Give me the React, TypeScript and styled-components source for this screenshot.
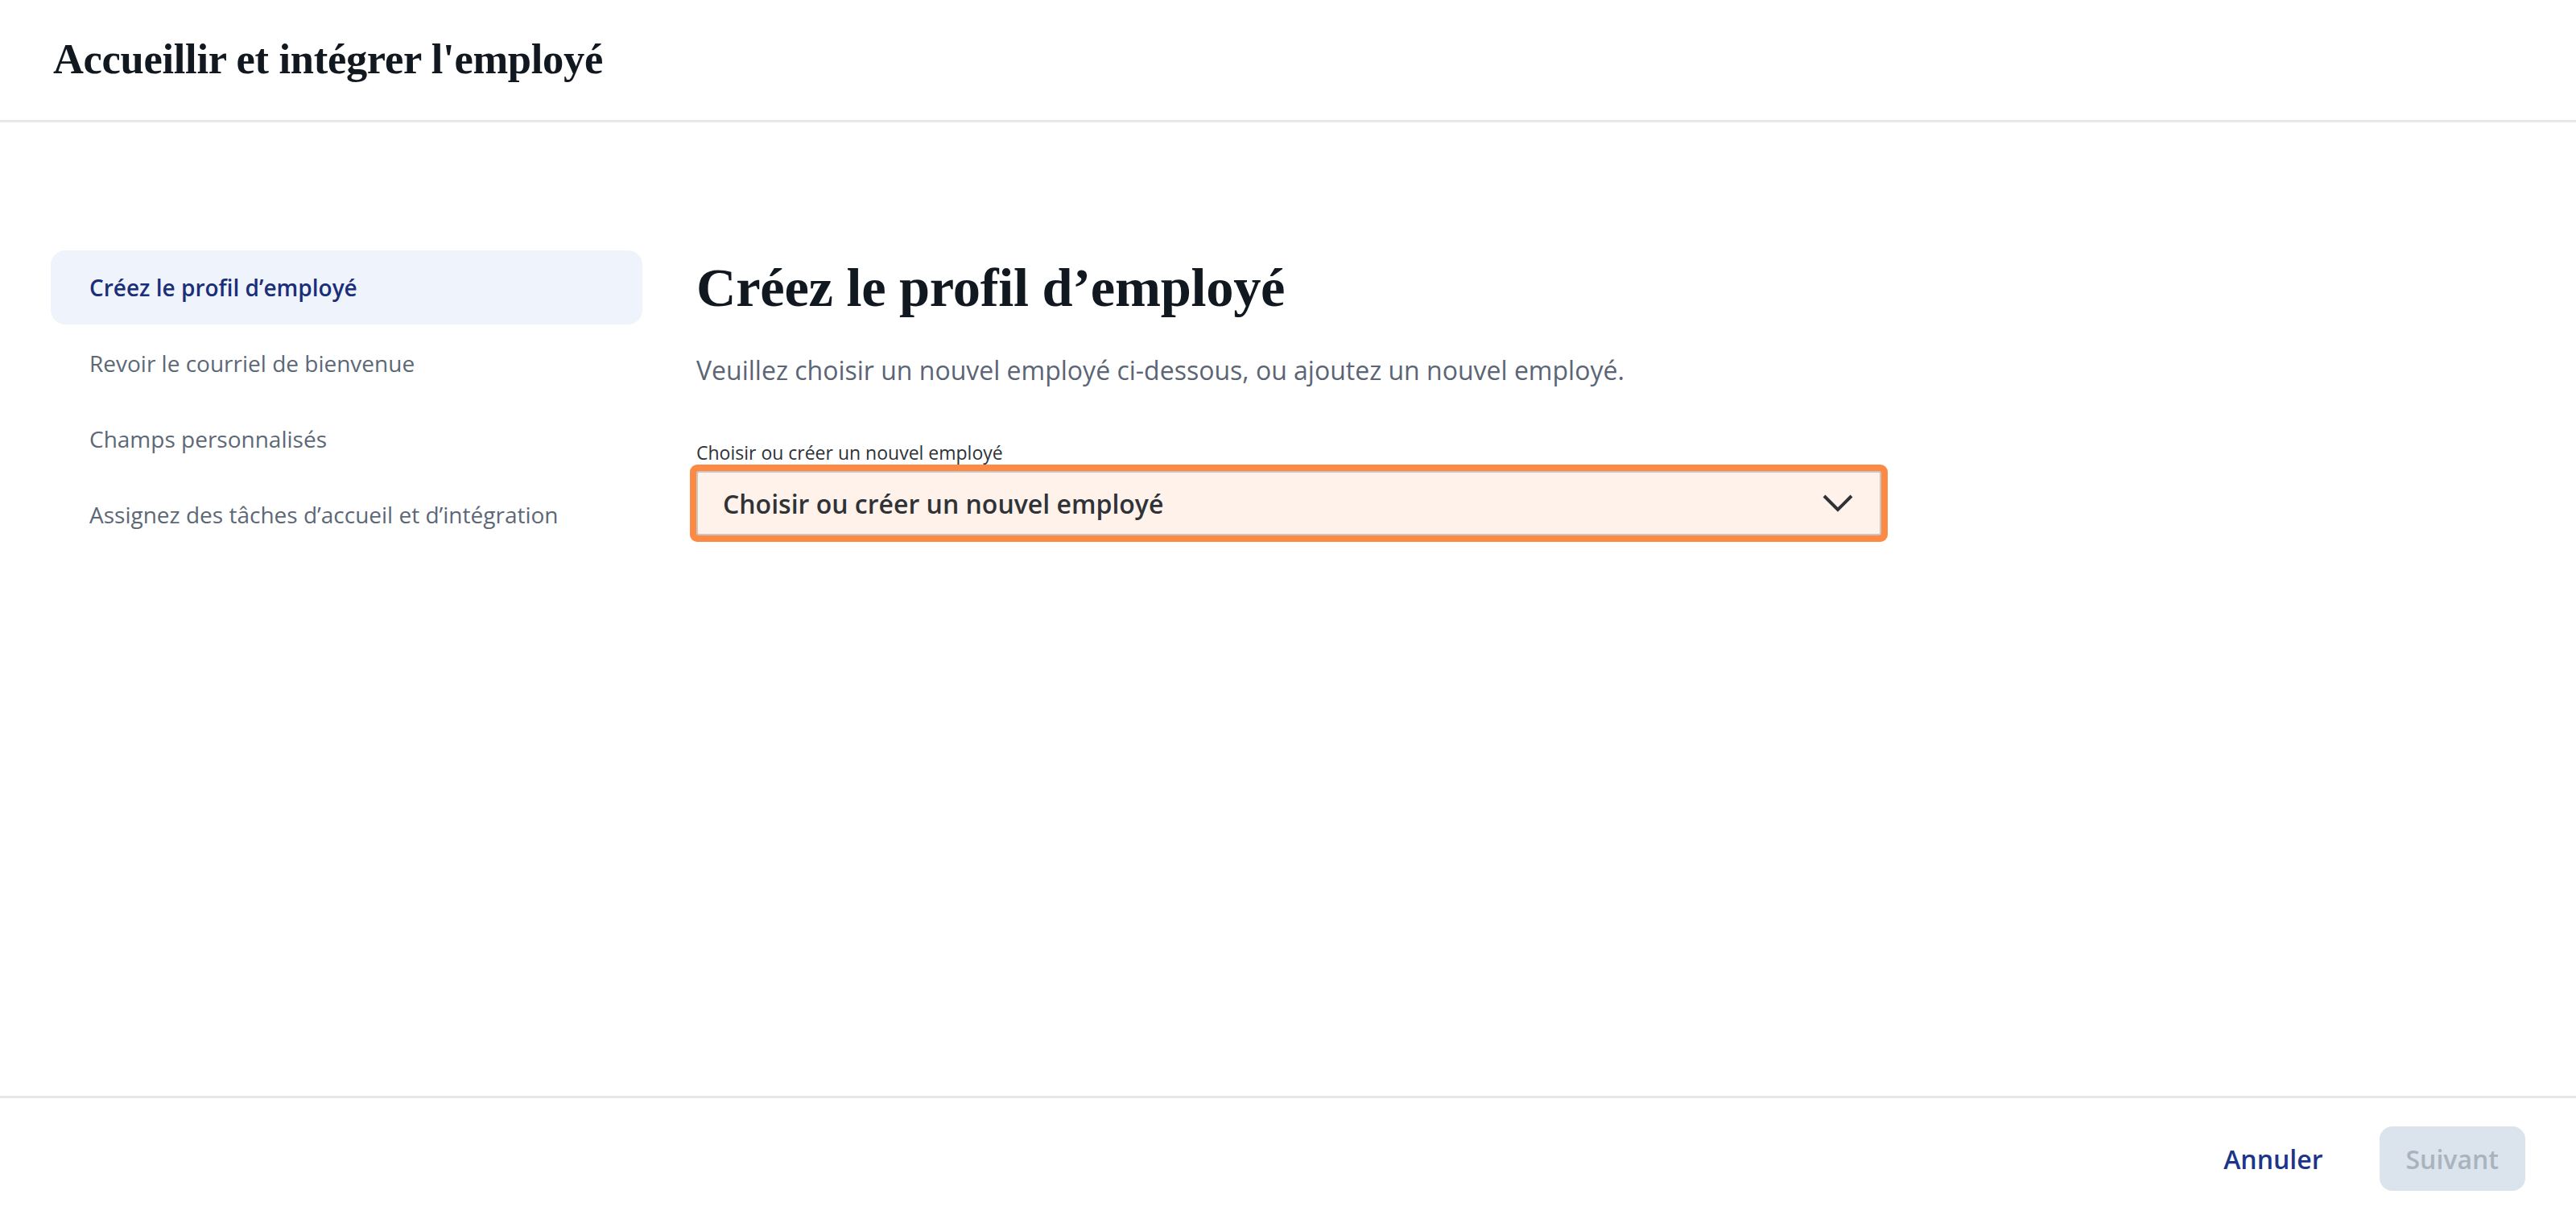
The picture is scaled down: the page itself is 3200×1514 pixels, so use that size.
import React, { useState } from "react";
import styled, { createGlobalStyle } from "styled-components";

const GlobalStyle = createGlobalStyle`
  html, body {
    margin: 0;
    padding: 0;
    background: #ffffff;
  }
  * {
    box-sizing: border-box;
  }
`;

const steps = [
  "Créez le profil d’employé",
  "Revoir le courriel de bienvenue",
  "Champs personnalisés",
  "Assignez des tâches d’accueil et d’intégration",
];

const Page = styled.div`
  min-height: 100vh;
  display: flex;
  flex-direction: column;
  font-family: "Open Sans", "Noto Sans", sans-serif;
  color: #333333;
`;

const Header = styled.header`
  height: 152px;
  display: flex;
  align-items: center;
  padding: 0 66px 4px;
  border-bottom: 3px solid #e6e7e9;
`;

const PageTitle = styled.h1`
  margin: 0;
  font-family: "Liberation Serif", "DejaVu Serif", serif;
  font-size: 52.5px;
  font-weight: 700;
  color: #121820;
  letter-spacing: -0.3px;
`;

const Body = styled.main`
  flex: 1;
  display: flex;
  gap: 67px;
  padding: 159px 63px 0;
`;

const Sidebar = styled.nav`
  width: 735px;
  display: flex;
  flex-direction: column;
  gap: 2px;
`;

interface StepProps {
  $active: boolean;
}

const Step = styled.div<StepProps>`
  height: 92px;
  display: flex;
  align-items: center;
  padding-left: 48px;
  border-radius: 18px;
  font-size: 28px;
  font-weight: ${({ $active }) => ($active ? 600 : 400)};
  color: ${({ $active }) => ($active ? "#1b2f78" : "#5d6877")};
  background: ${({ $active }) => ($active ? "#eff3fb" : "transparent")};
  cursor: pointer;
`;

const Content = styled.section`
  width: 1472px;
  display: flex;
  flex-direction: column;
`;

const Heading = styled.h2`
  margin: 0;
  height: 92px;
  display: flex;
  align-items: center;
  font-family: "Liberation Serif", "DejaVu Serif", serif;
  font-size: 68.5px;
  font-weight: 700;
  color: #121820;
  letter-spacing: -0.3px;
`;

const Intro = styled.p`
  margin: 33px 0 0;
  font-size: 32px;
  line-height: 48px;
  color: #5b6575;
`;

const FieldLabel = styled.label`
  margin-top: 63px;
  font-size: 23px;
  line-height: 30px;
  color: #2e3338;
`;

const SelectBox = styled.div`
  margin-top: 8px;
  height: 80px;
  display: flex;
  align-items: center;
  justify-content: space-between;
  padding: 0 33px 0 31px;
  background: #fff2ea;
  border: 2px solid #c9c6c4;
  border-radius: 3px;
  box-shadow: 0 0 0 8px #fc8a45;
  font-size: 32px;
  font-weight: 600;
  color: #2f3237;
  cursor: pointer;
`;

const Chevron = styled.svg`
  width: 38px;
  height: 22px;
`;

const Footer = styled.footer`
  height: 153px;
  display: flex;
  align-items: center;
  justify-content: flex-end;
  gap: 70px;
  padding: 0 63px 0 0;
  border-top: 3px solid #e6e7e9;
`;

const TextButton = styled.button`
  border: none;
  background: none;
  padding: 0;
  font-family: "Open Sans", "Noto Sans", sans-serif;
  font-size: 32px;
  font-weight: 600;
  color: #1c3587;
  cursor: pointer;
`;

const PrimaryButton = styled.button`
  height: 80px;
  padding: 0 33px;
  border: none;
  border-radius: 16px;
  background: #dbe3ec;
  font-family: "Open Sans", "Noto Sans", sans-serif;
  font-size: 32px;
  font-weight: 600;
  color: #a9b3be;
`;

const App: React.FC = () => {
  const [active, setActive] = useState(0);

  return (
    <Page>
      <GlobalStyle />
      <Header>
        <PageTitle>Accueillir et intégrer l'employé</PageTitle>
      </Header>
      <Body>
        <Sidebar>
          {steps.map((step, i) => (
            <Step key={step} $active={i === active} onClick={() => setActive(i)}>
              {step}
            </Step>
          ))}
        </Sidebar>
        <Content>
          <Heading>Créez le profil d’employé</Heading>
          <Intro>
            Veuillez choisir un nouvel employé ci-dessous, ou ajoutez un nouvel employé.
          </Intro>
          <FieldLabel>Choisir ou créer un nouvel employé</FieldLabel>
          <SelectBox>
            <span>Choisir ou créer un nouvel employé</span>
            <Chevron viewBox="0 0 38 22" fill="none">
              <path d="M2 2 L19 19 L36 2" stroke="#2f3237" strokeWidth="4" />
            </Chevron>
          </SelectBox>
        </Content>
      </Body>
      <Footer>
        <TextButton>Annuler</TextButton>
        <PrimaryButton disabled>Suivant</PrimaryButton>
      </Footer>
    </Page>
  );
};

export default App;
